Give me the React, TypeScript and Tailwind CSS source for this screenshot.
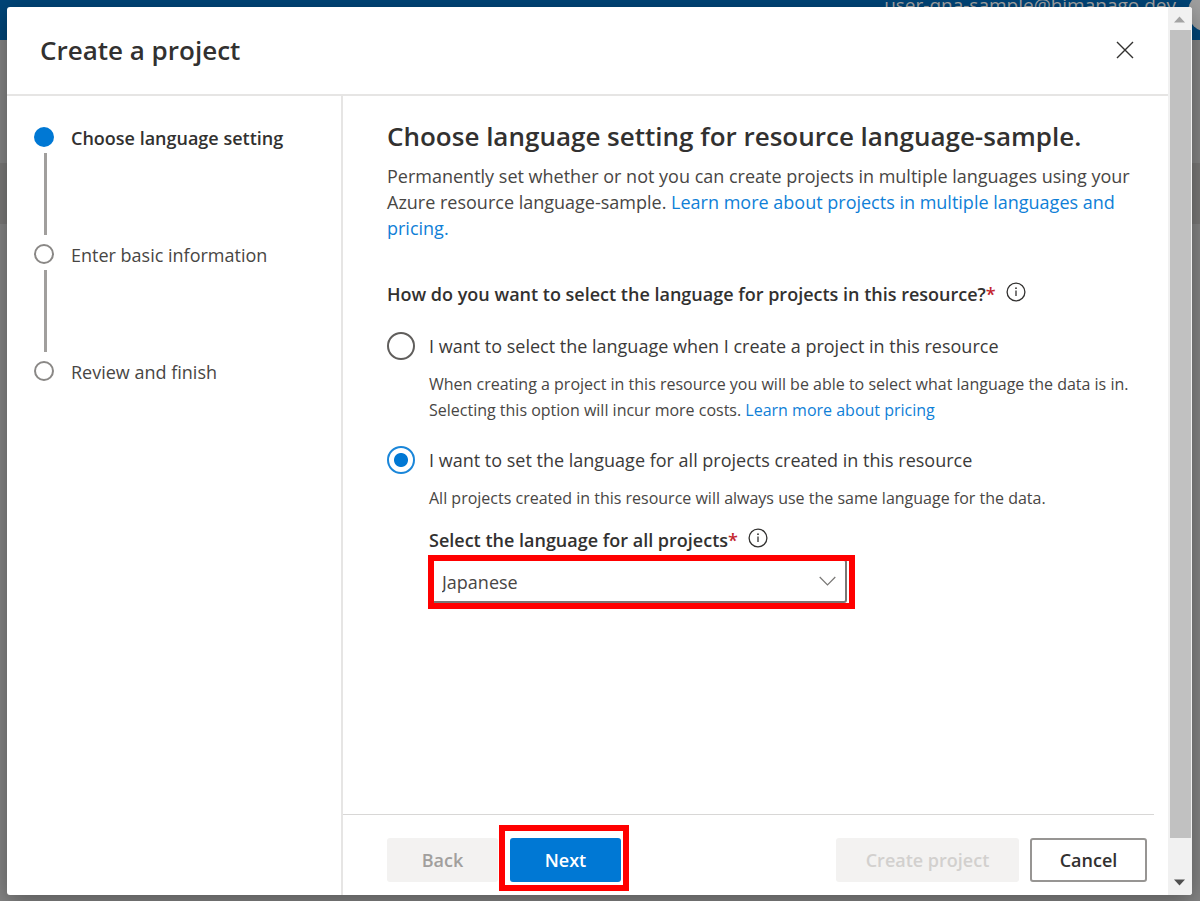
import { useState, type ReactNode } from "react";

const steps = ["Choose language setting", "Enter basic information", "Review and finish"];

function InfoIcon() {
  return (
    <svg className="mb-1 size-5 shrink-0" viewBox="0 0 20 20" fill="none" stroke="#323130" aria-hidden="true">
      <circle cx="10" cy="10" r="8.9" strokeWidth="1.3" />
      <path d="M10 8.400v5.600" strokeWidth="1.3" />
      <circle cx="10" cy="6.200" r="0.9" fill="#323130" stroke="none" />
    </svg>
  );
}

function StepList() {
  return (
    <nav aria-label="Steps" className="w-[336px] shrink-0 border-r-2 border-[#e6e5e4] pt-[29px] pl-[27px]">
      <ol>
        {steps.map((step, i) => (
          <li key={step} className="flex gap-[17px]">
            <div className="flex w-5 flex-col items-center pt-[2px]">
              {i === 0 ? (
                <span className="size-5 shrink-0 rounded-full bg-[#0078d4]" />
              ) : (
                <span className="size-5 shrink-0 rounded-full border-2 border-[#8a8886]" />
              )}
              {i < steps.length - 1 && <span className="mt-[6px] mb-[7px] ml-[3px] h-[82px] w-[3px] bg-[#a19f9d]" />}
            </div>
            <span className={i === 0 ? "text-lg/[26px] font-semibold text-[#323130]" : "text-lg/[26px] text-[#484644]"}>
              {step}
            </span>
          </li>
        ))}
      </ol>
    </nav>
  );
}

function Option(props: { id: string; checked: boolean; onSelect: () => void; label: string; children: ReactNode }) {
  return (
    <div>
      <div className="flex items-center gap-[14px]">
        <input
          type="radio"
          name="language-mode"
          id={props.id}
          checked={props.checked}
          onChange={props.onSelect}
          className="size-7 shrink-0 appearance-none rounded-full border-2 border-[#605e5c] checked:border-[#1a86d9] checked:bg-[radial-gradient(circle,#0078d4_6.5px,transparent_7.5px)]"
        />
        <label htmlFor={props.id} className="text-lg/7 text-[#3b3a39]">
          {props.label}
        </label>
      </div>
      <div className="mt-[11px] pl-[42px]">{props.children}</div>
    </div>
  );
}

function Scrollbar() {
  return (
    <div aria-hidden="true" className="flex w-6 shrink-0 flex-col items-center bg-[#f1f1f1]">
      <svg className="h-[23px] w-[22px]" viewBox="0 0 22 23">
        <path d="M5 15.500 10.500 9.500 16 15.500z" fill="#a3a3a3" />
      </svg>
      <div className="w-[21px] grow bg-[#c1c1c1]" />
      <svg className="h-[57px] w-[22px]" viewBox="0 0 22 57">
        <path d="M5 41.500h11l-5.500 6z" fill="#505050" />
      </svg>
    </div>
  );
}

export default function App() {
  const [mode, setMode] = useState("single");
  const [language, setLanguage] = useState("Japanese");

  return (
    <div className="relative flex min-h-screen flex-col bg-[#858585] font-['Open_Sans','Noto_Sans',sans-serif]">
      <div aria-hidden="true" className="absolute inset-0 flex flex-col overflow-hidden">
        <div className="flex h-10 shrink-0 justify-end bg-[#004578]">
          <span className="-mt-2 mr-3 text-[19px]/[26px] text-[#a6a6a6]">user-qna-sample@himanago.dev</span>
          <span className="-mt-2 -mr-7 size-10 shrink-0 rounded-full bg-[#a0a0a0]" />
        </div>
        <div className="h-[123px] shrink-0" />
        <div className="h-[61px] shrink-0 bg-[#7a7978]" />
        <div className="grow" />
      </div>

      <div
        role="dialog"
        aria-labelledby="dialog-title"
        className="relative mt-[7px] mr-2 mb-[6px] ml-[7px] flex grow overflow-hidden rounded-[3px] bg-white shadow-[0_6px_24px_rgba(0,0,0,0.35)]"
      >
        <div className="flex min-w-0 grow flex-col">
          <header className="flex h-[89px] shrink-0 items-center justify-between border-b-2 border-[#e6e5e4] pr-[34px] pb-[2px] pl-[33px]">
            <h1 id="dialog-title" className="text-[26px]/9 font-semibold text-[#323130]">
              Create a project
            </h1>
            <button type="button" aria-label="Close">
              <svg className="size-[18px]" viewBox="0 0 18 18" stroke="#323130" strokeWidth="1.4" aria-hidden="true">
                <path d="M1 1 17 17M17 1 1 17" />
              </svg>
            </button>
          </header>

          <div className="flex grow">
            <StepList />

            <div className="flex min-w-0 grow flex-col">
              <main className="grow pt-[22px] pr-4 pl-11">
                <h2 className="text-[26px]/9 font-semibold text-[#323130]">
                  Choose language setting for resource language-sample.
                </h2>
                <p className="mt-[9px] text-lg/[26px] text-[#484644]">
                  Permanently set whether or not you can create projects in multiple languages using your Azure resource
                  language-sample.{" "}
                  <a href="#languages" className="text-[#0f80d7]">
                    Learn more about projects in multiple languages and pricing.
                  </a>
                </p>

                <fieldset className="mt-10">
                  <legend className="flex items-center gap-[10px] text-lg/[26px] font-semibold text-[#323130]">
                    <span>
                      How do you want to select the language for projects in this resource?
                      <span className="text-[#c4262e]">*</span>
                    </span>
                    <InfoIcon />
                  </legend>

                  <div className="mt-[25px] flex flex-col gap-[23px]">
                    <Option
                      id="mode-multiple"
                      checked={mode === "multiple"}
                      onSelect={() => setMode("multiple")}
                      label="I want to select the language when I create a project in this resource"
                    >
                      <p className="text-base/[26px] text-[#484644]">
                        When creating a project in this resource you will be able to select what language the data is in.
                        Selecting this option will incur more costs.{" "}
                        <a href="#pricing" className="text-[#0f80d7]">
                          Learn more about pricing
                        </a>
                      </p>
                    </Option>

                    <Option
                      id="mode-single"
                      checked={mode === "single"}
                      onSelect={() => setMode("single")}
                      label="I want to set the language for all projects created in this resource"
                    >
                      <p className="text-base/[26px] text-[#484644]">
                        All projects created in this resource will always use the same language for the data.
                      </p>
                      <div className="mt-4 flex items-center gap-[10px]">
                        <label htmlFor="language" className="text-lg/[26px] font-semibold text-[#323130]">
                          Select the language for all projects<span className="text-[#c4262e]">*</span>
                        </label>
                        <InfoIcon />
                      </div>
                      <div className="relative mt-[6px] w-[418px] max-w-full">
                        <select
                          id="language"
                          value={language}
                          onChange={(e) => setLanguage(e.target.value)}
                          className="block h-11 w-full appearance-none rounded-[3px] border-2 border-[#797775] bg-white pt-[2px] pr-10 pl-[11px] text-lg text-[#484644]"
                        >
                          <option>Japanese</option>
                          <option>English</option>
                        </select>
                        <svg
                          className="pointer-events-none absolute top-[17px] right-[11px] h-[11px] w-[17px]"
                          viewBox="0 0 17 11"
                          fill="none"
                          stroke="#797775"
                          strokeWidth="1.2"
                          aria-hidden="true"
                        >
                          <path d="M0.700 1 8.500 9 16.300 1" />
                        </svg>
                        <span className="pointer-events-none absolute -top-1 -right-2 -bottom-[6px] -left-px border-[6px] border-[#ff0000]" />
                      </div>
                    </Option>
                  </div>
                </fieldset>
              </main>

              <footer className="mr-[14px] flex h-[81px] shrink-0 items-center justify-between border-t border-[#d8d7d6] pt-[10px] pr-[7px] pl-11">
                <div className="flex gap-3 text-lg font-semibold">
                  <button type="button" disabled className="h-11 w-[111px] rounded-[3px] bg-[#f3f2f1] text-[#a19f9d]">
                    Back
                  </button>
                  <div className="relative">
                    <button type="button" className="h-11 w-[111px] rounded-[3px] bg-[#0078d4] text-white">
                      Next
                    </button>
                    <span className="pointer-events-none absolute -top-[13px] -right-2 -bottom-[9px] -left-[11px] border-[6px] border-[#ff0000]" />
                  </div>
                </div>
                <div className="flex gap-[11px] text-lg font-semibold">
                  <button type="button" disabled className="h-11 w-[183px] rounded-[3px] bg-[#f3f2f1] text-[#d2d0ce]">
                    Create project
                  </button>
                  <button
                    type="button"
                    className="h-11 w-[117px] rounded-[3px] border-2 border-[#979593] bg-white text-[#323130]"
                  >
                    Cancel
                  </button>
                </div>
              </footer>
            </div>
          </div>
        </div>
        <Scrollbar />
      </div>
    </div>
  );
}
